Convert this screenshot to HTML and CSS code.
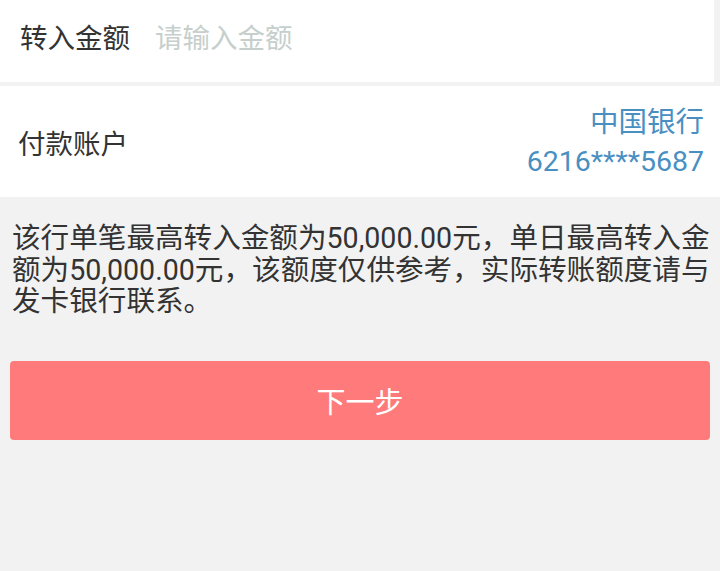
FILE: index.html
```html
<!DOCTYPE html>
<html lang="zh">
<head>
<meta charset="utf-8">
<link rel="stylesheet" href="styles.css">
</head>
<body>
<div class="row amount">
  <span class="label">转入金额</span>
  <span class="placeholder">请输入金额</span>
</div>
<div class="row account">
  <span class="label">付款账户</span>
  <div class="bank">
    <div class="bank-name">中国银行</div>
    <div class="bank-card">6216****5687</div>
  </div>
</div>
<p class="note">该行单笔最高转入金额为50,000.00元，单日最高转入金额为50,000.00元，该额度仅供参考，实际转账额度请与发卡银行联系。</p>
<button class="next">下一步</button>
</body>
</html>
```
FILE: styles.css
```css
html, body {
  margin: 0;
  padding: 0;
  background: #f2f2f2;
  font-family: "Noto Sans CJK SC", "Roboto", sans-serif;
}
.row {
  background: #fff;
  display: flex;
  align-items: center;
}
.amount {
  height: 82px;
  width: 714px;
  padding: 0 0 11px 20px;
  box-sizing: border-box;
  gap: 25px;
}
.account {
  margin-top: 4px;
  height: 111px;
  padding: 0 16px 0 18px;
  justify-content: space-between;
}
.label {
  font-size: 27.5px;
  color: #333;
}
.placeholder {
  font-size: 27.5px;
  color: #c6cfcc;
}
.bank {
  text-align: right;
  color: #4a8fc2;
  font-size: 28.5px;
  line-height: 39px;
  font-family: "Roboto", "Noto Sans CJK SC", sans-serif;
}
.note {
  margin: 26px 2px 0 12px;
  font-size: 28.6px;
  line-height: 31.5px;
  color: #333;
  font-family: "Roboto", "Noto Sans CJK SC", sans-serif;
}
.next {
  display: block;
  margin: 43px 10px 0;
  width: 700px;
  height: 79px;
  border: none;
  border-radius: 4px;
  background: #ff7b7b;
  color: #fff;
  font-size: 29px;
  font-family: "Noto Sans CJK SC", sans-serif;
}
```
